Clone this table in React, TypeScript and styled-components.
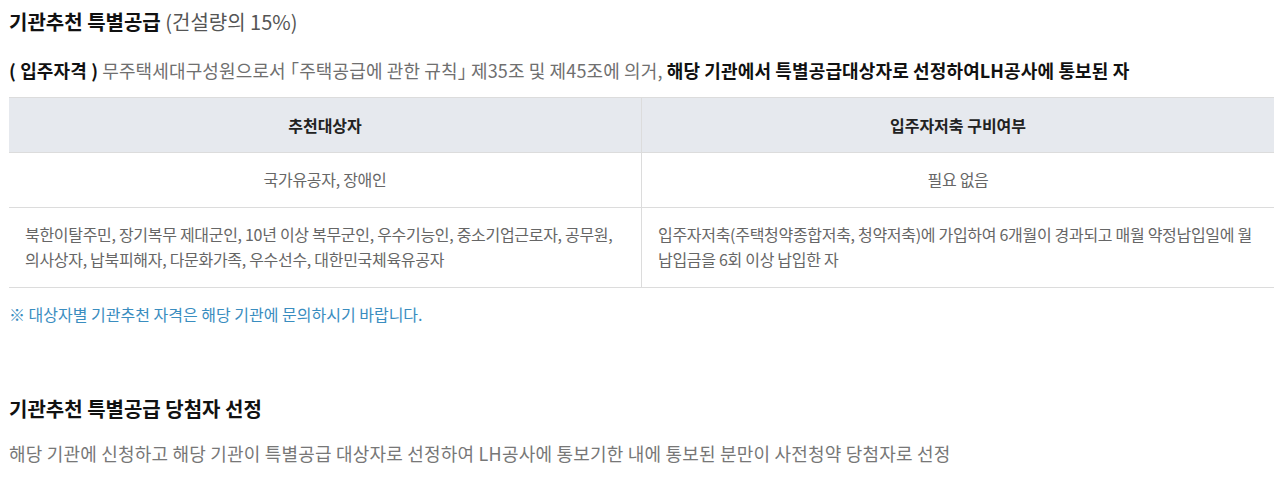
import styled, { createGlobalStyle } from 'styled-components';

const GlobalStyle = createGlobalStyle`
  body {
    margin: 0;
    background: #fff;
    font-family: "Noto Sans CJK KR", "Noto Sans", sans-serif;
  }
`;

const rows = [
  {
    target: '국가유공자, 장애인',
    savings: '필요 없음',
    align: 'center' as const,
  },
  {
    target:
      '북한이탈주민, 장기복무 제대군인, 10년 이상 복무군인, 우수기능인, 중소기업근로자, 공무원, 의사상자, 납북피해자, 다문화가족, 우수선수, 대한민국체육유공자',
    savings:
      '입주자저축(주택청약종합저축, 청약저축)에 가입하여 6개월이 경과되고 매월 약정납입일에 월 납입금을 6회 이상 납입한 자',
    align: 'left' as const,
  },
];

const App = () => {
  return (
    <>
      <GlobalStyle />
      <Page>
        <Section>
          <Title>
            기관추천 특별공급 <TitleSub>(건설량의 15%)</TitleSub>
          </Title>
          <Qualification>
            <strong>( 입주자격 )</strong> 무주택세대구성원으로서 <Bracket>「</Bracket>주택공급에 관한 규칙
            <Bracket>」</Bracket> 제35조 및 제45조에 의거,{' '}
            <strong>해당 기관에서 특별공급대상자로 선정하여LH공사에 통보된 자</strong>
          </Qualification>
          <Table>
            <thead>
              <tr>
                <HeadCell>추천대상자</HeadCell>
                <HeadCell>입주자저축 구비여부</HeadCell>
              </tr>
            </thead>
            <tbody>
              {rows.map((row) => (
                <tr key={row.target}>
                  <BodyCell $align={row.align}>{row.target}</BodyCell>
                  <BodyCell $align={row.align}>{row.savings}</BodyCell>
                </tr>
              ))}
            </tbody>
          </Table>
          <Note>※ 대상자별 기관추천 자격은 해당 기관에 문의하시기 바랍니다.</Note>
        </Section>
        <Section>
          <Title>기관추천 특별공급 당첨자 선정</Title>
          <Paragraph>
            해당 기관에 신청하고 해당 기관이 특별공급 대상자로 선정하여 LH공사에 통보기한 내에 통보된 분만이 사전청약 당첨자로 선정
          </Paragraph>
        </Section>
      </Page>
    </>
  );
};

export default App;

const Page = styled.div`
  width: 1265px;
  padding: 7px 5px 0 9px;
  display: flex;
  flex-direction: column;
  gap: 67px;
`;

const Section = styled.section`
  display: flex;
  flex-direction: column;
`;

const Title = styled.h3`
  margin: 0;
  font-size: 20px;
  line-height: 30px;
  font-weight: 700;
  color: #111;
`;

const TitleSub = styled.span`
  font-weight: 400;
  color: #555;
`;

const Qualification = styled.p`
  margin: 18px 0 0;
  font-size: 18px;
  line-height: 30px;
  letter-spacing: 0.13px;
  color: #6f6f6f;

  & > strong {
    color: #111;
  }
`;

// 낫표는 전각 여백을 줄여서 붙여 씀
const Bracket = styled.span`
  font-feature-settings: "halt";
`;

const Table = styled.table`
  margin-top: 12px;
  width: 100%;
  border-collapse: collapse;
  table-layout: fixed;
  border-top: 1px solid #dcdcdc;
`;

const HeadCell = styled.th`
  height: 54px;
  padding: 0 16px;
  background: #e6e9ee;
  font-size: 16px;
  font-weight: 700;
  color: #222;
  border-bottom: 1px solid #dcdcdc;
  border-left: 1px solid #dcdcdc;

  &:first-child {
    border-left: none;
  }
`;

const BodyCell = styled.td<{ $align: 'left' | 'center' }>`
  padding: 14px 16px 15px;
  text-align: ${(p) => p.$align};
  font-size: 16px;
  line-height: 25px;
  letter-spacing: -0.3px;
  color: #666;
  border-bottom: 1px solid #dcdcdc;
  border-left: 1px solid #dcdcdc;

  &:first-child {
    border-left: none;
  }
`;

const Note = styled.p`
  margin: 13px 0 0;
  font-size: 16px;
  line-height: 26px;
  color: #3a8dbf;
`;

const Paragraph = styled.p`
  margin: 14px 0 0;
  font-size: 18px;
  line-height: 30px;
  letter-spacing: 0.2px;
  color: #777;
`;
